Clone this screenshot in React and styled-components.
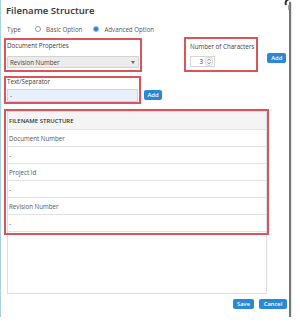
import React from "react";
import styled, { createGlobalStyle } from "styled-components";

const Global = createGlobalStyle`
  html, body { margin: 0; padding: 0; background: #ffffff; }
  body { font-family: "Open Sans", "DejaVu Sans", sans-serif; color: #444; }
  * { box-sizing: border-box; }
`;

const Dialog = styled.div`
  position: relative;
  width: 289px;
  height: 317px;
  background: #ffffff;
  border-left: 1px solid #a9d3da;
  box-shadow: 2px 2px 1px rgba(60, 60, 60, 0.7);
  padding: 4px 2px 0 3px;
  display: flex;
  flex-direction: column;
`;

const CloseCurl = styled.svg`
  position: absolute;
  top: -2px;
  right: -3px;
`;

const Title = styled.h1`
  margin: 0 0 0 2px;
  font-size: 9.6px;
  line-height: 14px;
  font-weight: 600;
  color: #333;
`;

const TypeRow = styled.div`
  display: flex;
  align-items: center;
  height: 10px;
  margin-top: 6px;
  padding-left: 3px;
  font-size: 6.2px;
  color: #555;
`;

const TypeLabel = styled.span`
  width: 28px;
`;

const Radio = styled.span`
  width: 6px;
  height: 6px;
  border-radius: 50%;
  border: 1px solid ${(p) => (p.$checked ? "#8fb5e6" : "#9a9a9a")};
  background: ${(p) => (p.$checked ? "#2c7be5" : "#fff")};
  margin-right: 5px;
`;

const RadioText = styled.span`
  margin-right: ${(p) => p.$gap || 0}px;
`;

const FormRow = styled.div`
  display: flex;
  align-items: flex-start;
  margin-top: ${(p) => p.$top}px;
`;

const Highlight = styled.div`
  border: 2px solid #d9555a;
  padding: ${(p) => p.$pad};
  width: ${(p) => (p.$w ? p.$w + "px" : "auto")};
  margin-top: ${(p) => p.$mt || 0}px;
  margin-left: ${(p) => p.$ml || 0}px;
`;

const Label = styled.div`
  font-size: 6.2px;
  line-height: ${(p) => p.$lh}px;
  color: #3d3d3d;
  margin-bottom: ${(p) => p.$mb}px;
  white-space: nowrap;
`;

const Select = styled.div`
  height: 12px;
  background: #ececec;
  border: 1px solid #d2d2d2;
  border-radius: 1px;
  display: flex;
  align-items: center;
  justify-content: space-between;
  padding: 0 3px 0 2px;
  font-size: 6.2px;
  color: #444;
`;

const Caret = styled.span`
  width: 0;
  height: 0;
  border-left: 2.5px solid transparent;
  border-right: 2.5px solid transparent;
  border-top: 3px solid #666;
`;

const NumberBox = styled.div`
  width: 25px;
  height: 11px;
  border: 1px solid #d6d6d6;
  background: #fff;
  display: flex;
  align-items: center;
  justify-content: flex-end;
  font-size: 6.2px;
  color: #333;
  padding-right: 1px;
`;

const Spinner = styled.svg`
  margin-left: 2px;
`;

const TextInput = styled.div`
  height: 13px;
  background: #e8f0fe;
  border: 1px solid #c2d5ee;
  display: flex;
  align-items: center;
  padding-left: 2px;
  font-size: 6.2px;
  color: #555;
`;

const Button = styled.button`
  font-family: "Open Sans", "DejaVu Sans", sans-serif;
  border: none;
  border-radius: 2px;
  background: #2a89d4;
  color: #fff;
  font-size: 5.8px;
  font-weight: 600;
  padding: 0;
  width: ${(p) => p.$w}px;
  height: 10px;
  line-height: 10px;
  margin-top: ${(p) => p.$mt || 0}px;
  margin-left: ${(p) => p.$ml || 0}px;
`;

const Panel = styled.div`
  position: relative;
  width: 260px;
  height: 183px;
  margin: 7px 0 0 3px;
  border: 1px solid #dedede;
  background: #fff;
`;

const PanelHeader = styled.div`
  height: 18px;
  background: #f4f4f4;
  border-bottom: 1px solid #e4e4e4;
  display: flex;
  align-items: center;
  padding-left: 1px;
  font-size: 6px;
  font-weight: 600;
  color: #333;
`;

const Row = styled.div`
  height: 17px;
  border-bottom: 1px solid #e2e2e2;
  display: flex;
  align-items: center;
  padding-left: 1px;
  font-size: 6.2px;
  color: #555;
`;

const TableHighlight = styled.div`
  position: absolute;
  top: -3px;
  left: -4px;
  right: -3px;
  height: 126px;
  border: 2px solid #d9555a;
  pointer-events: none;
`;

const Footer = styled.div`
  display: flex;
  justify-content: flex-end;
  gap: 5px;
  margin-top: 5px;
`;

const rows = ["Document Number", "-", "Project Id", "-", "Revision Number", "-"];

export default function App() {
  return (
    <>
      <Global />
      <Dialog>
        <CloseCurl width="8" height="12" viewBox="0 0 8 12">
          <path d="M7 1 C2 1 1 4 2 7" fill="none" stroke="#333" strokeWidth="2" />
          <path d="M5 7 L5 12" stroke="#888" strokeWidth="1.5" />
        </CloseCurl>
        <Title>Filename Structure</Title>
        <TypeRow>
          <TypeLabel>Type</TypeLabel>
          <Radio />
          <RadioText $gap={11}>Basic Option</RadioText>
          <Radio $checked />
          <RadioText>Advanced Option</RadioText>
        </TypeRow>
        <FormRow $top={3}>
          <Highlight $w={138} $mt={1} $pad="1px 1px 2px 1px">
            <Label $lh={9} $mb={6}>Document Properties</Label>
            <Select>
              <span>Revision Number</span>
              <Caret />
            </Select>
          </Highlight>
          <Highlight $ml={42} $pad="3px 2px 3px 4px">
            <Label $lh={9} $mb={5}>Number of Characters</Label>
            <NumberBox>
              3
              <Spinner width="8" height="9" viewBox="0 0 8 9">
                <rect x="0.5" y="0.5" width="7" height="8" rx="2" fill="#f4f4f4" stroke="#dadada" />
                <path d="M2.6 3.6 L4 2.2 L5.4 3.6" fill="none" stroke="#666" strokeWidth="0.8" />
                <path d="M2.6 5.4 L4 6.8 L5.4 5.4" fill="none" stroke="#666" strokeWidth="0.8" />
              </Spinner>
            </NumberBox>
          </Highlight>
          <Button $w={19} $mt={16} $ml={9}>Add</Button>
        </FormRow>
        <FormRow $top={4}>
          <Highlight $w={137} $pad="0 1px 0 1px">
            <Label $lh={8} $mb={3}>Text/Separator</Label>
            <TextInput>-</TextInput>
          </Highlight>
          <Button $w={18} $mt={14} $ml={3}>Add</Button>
        </FormRow>
        <Panel>
          <PanelHeader>FILENAME STRUCTURE</PanelHeader>
          {rows.map((r, i) => (
            <Row key={i}>{r}</Row>
          ))}
          <TableHighlight />
        </Panel>
        <Footer>
          <Button $w={21}>Save</Button>
          <Button $w={28}>Cancel</Button>
        </Footer>
      </Dialog>
    </>
  );
}
